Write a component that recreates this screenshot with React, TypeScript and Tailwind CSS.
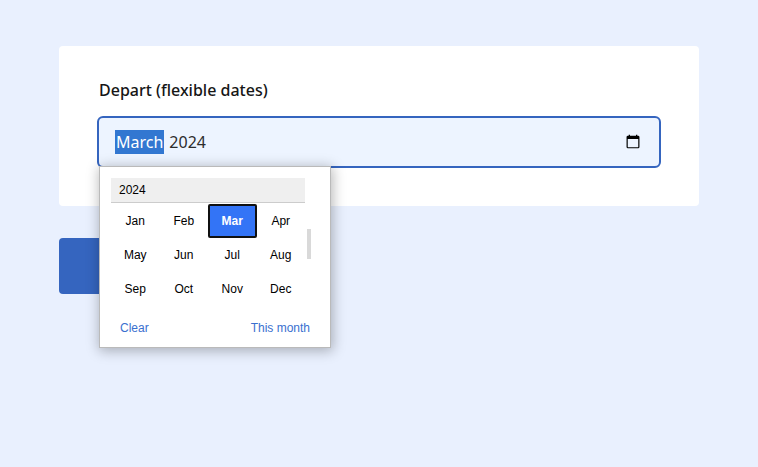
const months = ['Jan', 'Feb', 'Mar', 'Apr', 'May', 'Jun', 'Jul', 'Aug', 'Sep', 'Oct', 'Nov', 'Dec'];

function CalendarIcon() {
  return (
    <svg width="16" height="16" viewBox="0 0 16 16" aria-hidden="true">
      <rect x="2.150" y="2.250" width="11.700" height="11.500" rx="0.800" fill="none" stroke="#000" strokeWidth="1.200" />
      <path d="M2 2h12v3H2zM3.700 0.700h1.300v1.500H3.700zM11 0.700h1.300v1.500H11z" fill="#000" />
    </svg>
  );
}

function MonthPicker() {
  return (
    <div className="absolute top-12 left-0 flex h-[182px] w-[232px] flex-col border border-[#bababa] bg-white pt-[11px] pl-[11px] font-['Liberation_Sans',Arial,sans-serif] text-xs text-black shadow-[1px_2px_12px_1px_rgba(0,0,0,0.28)]">
      <div className="flex">
        <div className="w-[194px]">
          <div className="h-[25px] border-b border-[#ccc] bg-[#efefef] pl-2 leading-6">2024</div>
          <div className="mt-px grid grid-cols-4">
            {months.map((m) => (
              <div
                key={m}
                className={
                  m === 'Mar'
                    ? 'flex h-[34px] items-center justify-center rounded-[2px] border-2 border-[#101010] bg-[#3374f6] font-bold text-white'
                    : 'flex h-[34px] items-center justify-center'
                }
              >
                {m}
              </div>
            ))}
          </div>
        </div>
        <div className="mt-[51px] ml-[2px] h-[30px] w-1 bg-[#d9d9d9]" />
      </div>
      <div className="mt-[14px] flex justify-between pr-5 pl-[9px] leading-4 text-[#3a70cf]">
        <span>Clear</span>
        <span>This month</span>
      </div>
    </div>
  );
}

export default function App() {
  return (
    <main className="h-screen overflow-hidden bg-[#e9f0fe] px-[59px] pt-[46px] font-['Noto_Sans',sans-serif] text-base text-[#161616]">
      <section className="h-40 w-[640px] rounded bg-white px-[38px] pt-8">
        <label className="block pl-[2px] leading-6 font-medium">Depart (flexible dates)</label>
        <div className="relative mt-[14px] flex h-[52px] items-center rounded-md border-2 border-[#3565bf] bg-[#edf4ff] pr-[18px] pl-4">
          <span className="bg-[#3277d1] px-px leading-6 text-white">March</span>
          <span className="ml-[5px] leading-6 text-[#2c2c2c]">2024</span>
          <span className="ml-auto">
            <CalendarIcon />
          </span>
          <MonthPicker />
        </div>
      </section>
      <div className="mt-8 h-14 w-40 rounded bg-[#3565bf]" />
    </main>
  );
}
